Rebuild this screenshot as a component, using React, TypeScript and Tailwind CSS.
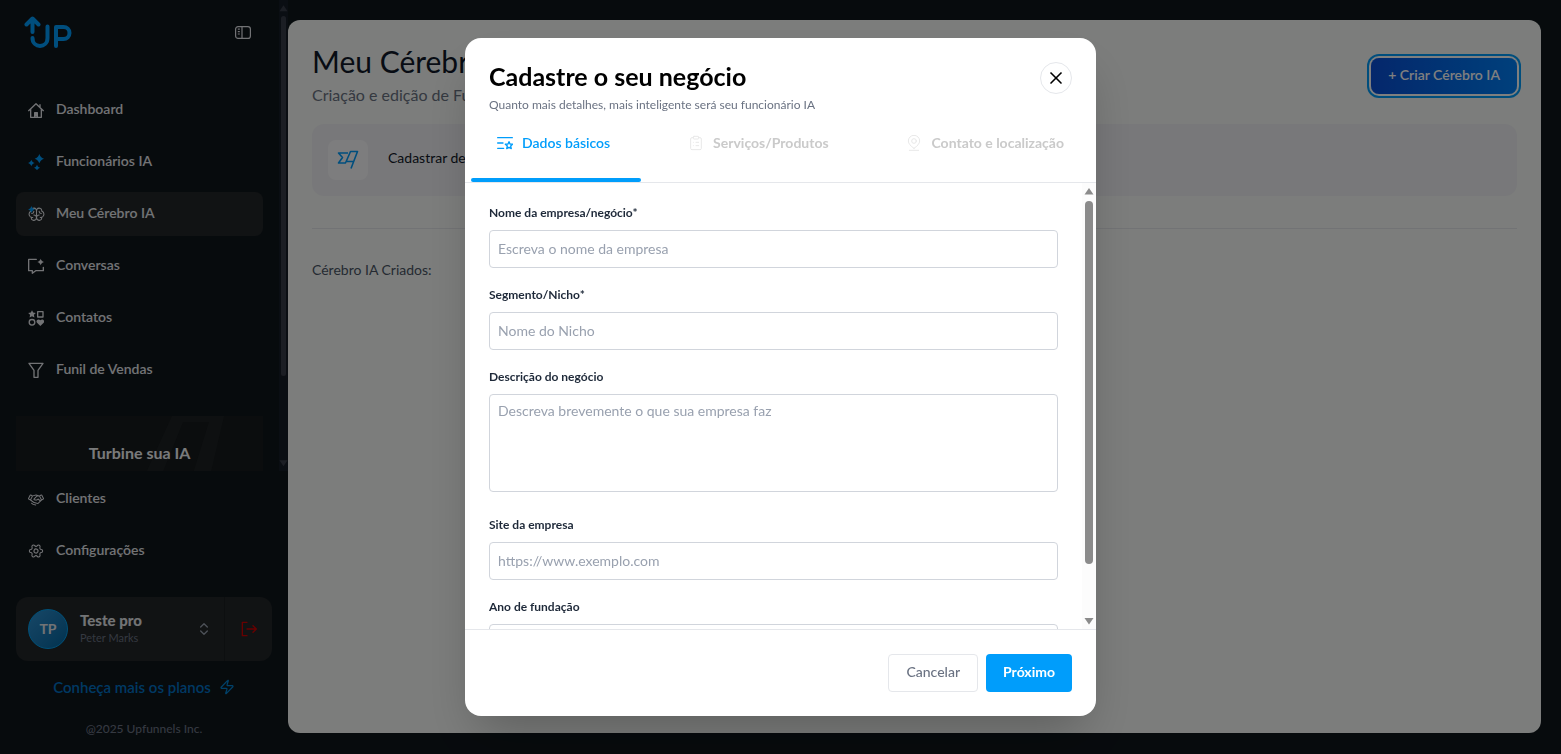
import type { ReactNode } from "react";
import { ChevronsUpDown, ClipboardList, Settings, X, Zap } from "lucide-react";
import { PiBrain, PiHandshake } from "react-icons/pi";

const STAR = "M0 -5 C0.6 -1.6 1.6 -0.6 5 0 C1.6 0.6 0.6 1.6 0 5 C-0.6 1.6 -1.6 0.6 -5 0 C-1.6 -0.6 -0.6 -1.6 0 -5Z";
const FAT_STAR = "M0 -5 C1 -2.2 2.2 -1 5 0 C2.2 1 1 2.2 0 5 C-1 2.2 -2.2 1 -5 0 C-2.2 -1 -1 -2.2 0 -5Z";

function Svg({ children, width = 2 }: { children: ReactNode; width?: number }) {
  return (
    <svg width="16" height="16" viewBox="0 0 24 24" fill="none" stroke="currentColor" strokeWidth={width} strokeLinecap="round" strokeLinejoin="round" aria-hidden="true">
      {children}
    </svg>
  );
}

const HomeIcon = () => (
  <Svg>
    <path d="M1 13 12 2.5 23 13M4 10.500V23h16V10.500M18 8V4" />
    <path d="M10 22v-6h4v6" fill="currentColor" />
  </Svg>
);

const SparklesIcon = () => (
  <Svg>
    <g fill="#009dfb" stroke="none">
      <path d={FAT_STAR} transform="translate(17 7) scale(1.400)" />
      <path d={FAT_STAR} transform="translate(5 13.500)" />
      <path d={FAT_STAR} transform="translate(13.500 20.500) scale(0.900)" />
    </g>
  </Svg>
);

const BrainIcon = () => (
  <span className="relative block">
    <PiBrain size={17} aria-hidden="true" />
    <svg className="absolute top-0 left-0" width="7" height="7" viewBox="-5 -5 10 10" aria-hidden="true">
      <path d={FAT_STAR} fill="#009dfb" />
    </svg>
  </span>
);

const ChatIcon = () => (
  <Svg>
    <path d="M12.500 2H1v17h5.500v4l5-4H23v-5" />
    <path d={FAT_STAR} fill="currentColor" stroke="none" transform="translate(19 6)" />
  </Svg>
);

const ShapesIcon = () => (
  <Svg>
    <path d="M6 .5l1.800 3.400 3.900.6-2.800 2.700.7 3.900L6 9.300l-3.600 1.800.7-3.900L.3 4.500l3.900-.6z" fill="currentColor" stroke="none" />
    <path d="M14.500 2.500h8v8h-8z" />
    <circle cx="6" cy="18.500" r="4.200" />
    <path d="M18.500 24l-5-5c-2.600-3 2-6.700 5-3.500 3-3.200 7.600.5 5 3.500z" fill="currentColor" stroke="none" />
  </Svg>
);

const FunnelIcon = () => (
  <Svg>
    <path d="M1.500 2h21L15 12.500V23H9V12.500z" />
  </Svg>
);

const NAV = [
  { label: "Dashboard", icon: <HomeIcon /> },
  { label: "Funcionários IA", icon: <SparklesIcon /> },
  { label: "Meu Cérebro IA", icon: <BrainIcon />, active: true },
  { label: "Conversas", icon: <ChatIcon /> },
  { label: "Contatos", icon: <ShapesIcon /> },
  { label: "Funil de Vendas", icon: <FunnelIcon /> },
];

const NAV_BOTTOM = [
  { label: "Clientes", icon: <PiHandshake size={17} aria-hidden="true" /> },
  { label: "Configurações", icon: <Settings size={16} strokeWidth={1.6} className="rotate-30" aria-hidden="true" /> },
];

function NavItem({ label, icon, active }: { label: string; icon: ReactNode; active?: boolean }) {
  return (
    <a href="#" className={`flex h-11 items-center gap-3 rounded-lg px-3 text-sm font-semibold text-gray-200 ${active ? "bg-[#222628]" : ""}`}>
      <span className="flex w-4 justify-center">{icon}</span>
      <span className="pb-[2px]">{label}</span>
    </a>
  );
}

function Scrollbar({ track, thumb, gutter, arrow }: { track: string; thumb: string; gutter: string; arrow: string }) {
  return (
    <div className={`flex shrink-0 flex-col items-center justify-between ${track}`} aria-hidden="true">
      <svg width="10" height="16" viewBox="0 0 10 16" className={`max-w-full ${arrow}`}>
        <path d="M5 5 9.500 11.500H.5z" fill="currentColor" />
      </svg>
      <div className={`min-h-0 w-full flex-1 ${gutter}`}>
        <div className={`w-full rounded-full ${thumb}`} />
      </div>
      <svg width="10" height="16" viewBox="0 0 10 16" className={`max-w-full ${arrow}`}>
        <path d="M5 11.500 9.500 5H.5z" fill="currentColor" />
      </svg>
    </div>
  );
}

function Sidebar() {
  return (
    <aside className="flex w-72 shrink-0 flex-col">
      <div className="flex min-h-0 flex-1">
        <div className="flex min-w-0 flex-1 flex-col overflow-hidden px-4">
          <div className="flex items-center justify-between py-4 pl-2 pr-3">
            <svg width="49" height="32" viewBox="0 0 49 32" fill="none" stroke="#009dfb" strokeWidth="4" strokeLinecap="round" strokeLinejoin="round" role="img" aria-label="UP">
              <path d="M8.500 16V3M2.500 8.500l6-6 6 6" />
              <path d="M8.500 22c0 10.500 15 10.500 15 0V10.500" />
              <path d="M32 30V11h7.500a5.500 5.500 0 0 1 0 12H32" />
            </svg>
            <button type="button" aria-label="Recolher menu" className="text-gray-200">
              <svg width="16" height="13" viewBox="0 0 16 13" fill="none" stroke="currentColor" strokeWidth="1.200">
                <rect x=".6" y=".6" width="14.800" height="11.800" rx="2.500" />
                <path d="M7 .6v11.800M2.800 3.200h2M2.800 5.600h2M2.800 8h2" />
              </svg>
            </button>
          </div>
          <nav className="flex flex-col gap-2 pt-6">
            {NAV.map(item => <NavItem key={item.label} {...item} />)}
          </nav>
          <div className="relative mt-6 flex h-40 shrink-0 justify-center overflow-hidden bg-[#161a1c] pt-[25px]">
            <svg className="absolute right-9 top-0" width="90" height="90" viewBox="0 0 90 90" fill="#1d2123" aria-hidden="true">
              <path d="M35 0h52L66 90H46L72 6H46L12 90H-6z" />
            </svg>
            <span className="relative text-base leading-6 font-bold text-gray-100">Turbine sua IA</span>
          </div>
        </div>
        <Scrollbar track="w-[9px] bg-[#151c26]" thumb="h-[82%] bg-[#373c48]" gutter="px-[2px]" arrow="text-[#373c48]" />
      </div>

      <div className="flex flex-col px-4 pt-[6px]">
        <nav className="flex flex-col gap-2 pr-2">
          {NAV_BOTTOM.map(item => <NavItem key={item.label} {...item} />)}
        </nav>
        <div className="mt-6 flex h-16 items-stretch rounded-xl bg-[#222628]">
          <button type="button" className="flex flex-1 items-center gap-3 px-3 text-left">
            <span className="flex size-10 items-center justify-center rounded-full border border-[#00a0f0] bg-linear-to-br from-[#2d8fcf] to-[#00659f] text-sm font-bold text-gray-200">TP</span>
            <span className="flex flex-1 flex-col pb-[2px]">
              <span className="text-[15px] leading-5 font-black text-gray-200">Teste pro</span>
              <span className="text-[11px] leading-4 text-gray-500">Peter Marks</span>
            </span>
            <ChevronsUpDown size={16} className="text-gray-400" aria-hidden="true" />
          </button>
          <button type="button" aria-label="Sair" className="flex w-12 items-center justify-center border-l border-[#1a1e20] text-[#d00000]">
            <Svg>
              <path d="M9 2H2v20h7M9 12h14M18 7l5 5-5 5" />
            </Svg>
          </button>
        </div>
        <a href="#" className="mt-4 flex items-center justify-center gap-2 text-[15px] leading-5 font-semibold text-[#0072c6]">
          Conheça mais os planos
          <Zap size={16} strokeWidth={1.8} className="text-[#0083d4]" aria-hidden="true" />
        </a>
        <p className="mt-6 mb-[17px] text-center text-xs leading-4 font-medium text-gray-500">@2025 Upfunnels Inc.</p>
      </div>
    </aside>
  );
}

function Page() {
  return (
    <main className="mt-5 mr-5 mb-[21px] min-w-0 flex-1 rounded-xl bg-[#f8fbf8] px-6 pt-[23px]">
      <div className="flex items-start justify-between">
        <div>
          <h1 className="text-3xl leading-9 text-gray-900">Meu Cérebro IA</h1>
          <p className="mt-1 text-base leading-6 text-gray-500">Criação e edição de Funcionários IA</p>
        </div>
        <button type="button" className="mt-[15px] h-9 rounded-lg bg-linear-to-r from-[#0a4fd8] to-[#0080f8] px-[17px] pb-[2px] text-sm font-semibold text-white ring-2 ring-[#009dfb] ring-offset-2">
          + Criar Cérebro IA
        </button>
      </div>
      <section className="mt-[17px] flex h-[72px] items-center gap-5 rounded-xl bg-[#f1f1f4] px-4">
        <span className="flex size-10 items-center justify-center rounded-lg bg-[#fbfbfd]">
          <svg width="22" height="20" viewBox="0 0 22 20" fill="none" stroke="#009dfb" strokeWidth="1.600" strokeLinejoin="round" aria-hidden="true">
            <path d="M11 3H1.500l4 4.500L1.500 13h7l5-11.500h7L14 18.500M10 11.500h6" />
          </svg>
        </span>
        <p className="pb-1 text-sm text-gray-900">Cadastrar dez cérebros</p>
      </section>
      <hr className="mt-8 border-gray-200" />
      <h2 className="mt-[31px] text-sm leading-5 text-gray-600">Cérebro IA Criados:</h2>
    </main>
  );
}

const TABS = [
  {
    label: "Dados básicos",
    active: true,
    icon: (
      <Svg>
        <path d="M1 4h22M1 12h8M1 20h9" />
        <path d="M18 10l1.500 3.500 4 .4-3 2.600.9 4-3.400-2.200-3.400 2.200.9-4-3-2.600 4-.4z" />
      </Svg>
    ),
  },
  { label: "Serviços/Produtos", active: false, icon: <ClipboardList size={16} strokeWidth={1.5} aria-hidden="true" /> },
  {
    label: "Contato e localização",
    active: false,
    icon: (
      <Svg width={1.5}>
        <path d="M12 20c-5-3.500-8.500-7-8.500-11a8.500 8.500 0 0 1 17 0c0 4-3.500 7.500-8.500 11zM5 23h14" />
        <circle cx="12" cy="9" r="3.500" />
      </Svg>
    ),
  },
];

const FIELDS = [
  { id: "nome", label: "Nome da empresa/negócio*", placeholder: "Escreva o nome da empresa" },
  { id: "nicho", label: "Segmento/Nicho*", placeholder: "Nome do Nicho" },
  { id: "descricao", label: "Descrição do negócio", placeholder: "Descreva brevemente o que sua empresa faz", multiline: true },
  { id: "site", label: "Site da empresa", placeholder: "https://www.exemplo.com" },
  { id: "ano", label: "Ano de fundação", placeholder: "" },
];

const FIELD = "block w-full rounded border border-gray-300 px-2 text-sm text-gray-900 placeholder:text-gray-400";

function BusinessDialog() {
  return (
    <div role="dialog" aria-modal="true" aria-labelledby="dialog-title" className="flex h-[90vh] w-full max-w-[631px] flex-col overflow-hidden rounded-2xl bg-white shadow-2xl">
      <header className="flex items-start justify-between px-6 pt-[22px]">
        <div>
          <h2 id="dialog-title" className="text-[25px] leading-8 font-bold text-black">Cadastre o seu negócio</h2>
          <p className="mt-[5px] text-xs leading-4 text-gray-500">Quanto mais detalhes, mais inteligente será seu funcionário IA</p>
        </div>
        <button type="button" aria-label="Fechar" className="mt-[2px] flex size-8 items-center justify-center rounded-full border border-gray-200 text-black">
          <X size={20} aria-hidden="true" />
        </button>
      </header>

      <div role="tablist" className="relative flex justify-between border-b border-gray-200 px-8 pt-5 pb-[29px]">
        {TABS.map(tab => (
          <button key={tab.label} type="button" role="tab" aria-selected={tab.active} className={`flex items-center gap-[9px] text-sm leading-5 ${tab.active ? "font-semibold text-[#009dfb]" : "font-bold text-[#cacaca]"}`}>
            <span className={tab.active ? "" : "text-[#e8e8e8]"}>{tab.icon}</span>
            {tab.label}
          </button>
        ))}
        <span className="absolute bottom-0 left-[6px] h-1 w-[170px] rounded-xs bg-[#009dfb]" />
      </div>

      <div className="flex min-h-0 flex-1">
        <form className="flex min-w-0 flex-1 flex-col gap-[19px] overflow-hidden px-6 pt-[22px]">
          {FIELDS.map(f => (
            <div key={f.id}>
              <label htmlFor={f.id} className="mb-[9px] block text-xs leading-4 font-bold text-gray-800">{f.label}</label>
              {f.multiline
                ? <textarea id={f.id} placeholder={f.placeholder} className={`${FIELD} mb-[6px] h-[98px] resize-none py-[6px]`} />
                : <input id={f.id} type="text" placeholder={f.placeholder} className={`${FIELD} h-[38px]`} />}
            </div>
          ))}
        </form>
        <Scrollbar track="w-[14px] bg-[#fcfcfc]" thumb="h-[88%] bg-[#8b8b8b]" gutter="px-[3px] pt-[2px]" arrow="text-[#8b8b8b]" />
      </div>

      <footer className="flex justify-end gap-2 border-t border-gray-200 p-6">
        <button type="button" className="h-[38px] rounded border border-gray-200 px-[17px] pb-[2px] text-sm font-medium text-gray-500">Cancelar</button>
        <button type="button" className="h-[38px] rounded bg-[#009dfb] px-[17px] pb-[2px] text-sm font-bold text-white">Próximo</button>
      </footer>
    </div>
  );
}

export default function App() {
  return (
    <div className="flex h-screen overflow-hidden bg-[#0f161b] font-['Lato','Open_Sans',sans-serif]">
      <Sidebar />
      <Page />
      <div className="fixed inset-0 flex items-center justify-center bg-black/50">
        <BusinessDialog />
      </div>
    </div>
  );
}
